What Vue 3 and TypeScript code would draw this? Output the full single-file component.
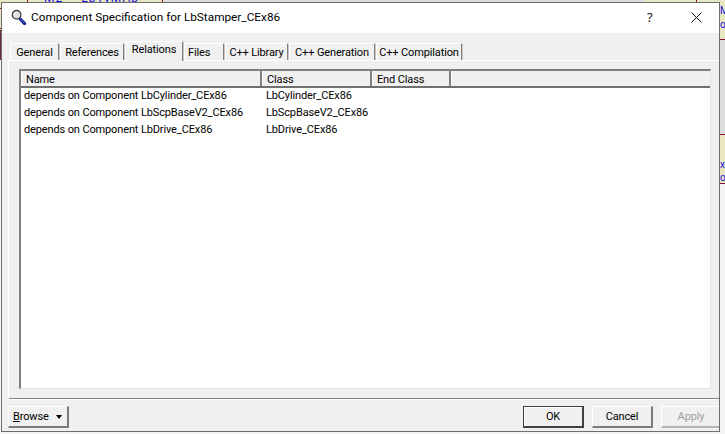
<script setup lang="ts">
interface Tab { label: string; width: number; active?: boolean; left?: boolean }
const tabs: Tab[] = [
  { label: 'General', width: 49 },
  { label: 'References', width: 64 },
  { label: 'Relations', width: 58, active: true },
  { label: 'Files', width: 40, left: true },
  { label: 'C++ Library', width: 63 },
  { label: 'C++ Generation', width: 86 },
  { label: 'C++ Compilation', width: 86 },
]
const rows = [
  { name: 'depends on Component LbCylinder_CEx86', cls: 'LbCylinder_CEx86' },
  { name: 'depends on Component LbScpBaseV2_CEx86', cls: 'LbScpBaseV2_CEx86' },
  { name: 'depends on Component LbDrive_CEx86', cls: 'LbDrive_CEx86' },
]
</script>

<template>
  <div class="desk">
    <div class="bg-top-cream"></div>
    <div class="bg-top-grey"></div>
    <div class="bg-v v1"></div>
    <div class="bg-v v2"></div>
    <div class="bg-v v3"></div>
    <div class="bg-topblue">
      <span>M2</span><span>LbTyMAb</span>
    </div>
    <div class="bg-right"></div>
    <div class="bg-right-grey"></div>
    <div class="bg-right-line l1"></div>
    <div class="bg-right-line l2"></div>
    <div class="bg-right-line l3"></div>
    <div class="bg-txt t1">M</div>
    <div class="bg-txt t2">oe</div>
    <div class="bg-txt t3">xB</div>
    <div class="bg-txt t4">oe</div>
    <div class="bg-left"></div>
    <div class="bg-left-line h1"></div>
    <div class="bg-left-line h2"></div>
    <div class="bg-left-dark"></div>

    <div class="window">
      <header class="title">
        <svg class="logo" width="16" height="16" viewBox="0 0 16 16">
          <path d="M8.5 9.2 L13.6 14.6" stroke="#10107a" stroke-width="3" stroke-linecap="round" />
          <path d="M8.8 9.4 L13.4 14.2" stroke="#3a5ae8" stroke-width="1.2" />
          <circle cx="5.6" cy="5.8" r="4.3" fill="#e0e0e0" stroke="#404040" stroke-width="1.3" />
          <path d="M3.4 6 A2.4 2.4 0 0 1 5.6 3.5" fill="none" stroke="#fff" stroke-width="1.2" />
        </svg>
        <span class="title-text">Component Specification for LbStamper_CEx86</span>
        <span class="help">?</span>
        <svg class="close" width="11" height="11" viewBox="0 0 11 11">
          <path d="M0.5 0.5 L10.5 10.5 M10.5 0.5 L0.5 10.5" stroke="#111" stroke-width="1" />
        </svg>
      </header>

      <nav class="tabs">
        <div
          v-for="t in tabs"
          :key="t.label"
          class="tab"
          :class="{ active: t.active, left: t.left }"
          :style="{ width: t.width + 'px' }"
        >{{ t.label }}</div>
      </nav>

      <section class="panel">
        <div class="list">
          <div class="head">
            <div class="hc c-name">Name</div>
            <div class="hc c-class">Class</div>
            <div class="hc c-end">End Class</div>
            <div class="hc c-rest"></div>
          </div>
          <div v-for="r in rows" :key="r.name" class="row">
            <div class="cell c-name">{{ r.name }}</div>
            <div class="cell c-class">{{ r.cls }}</div>
          </div>
        </div>
      </section>

      <footer class="foot">
        <div class="btn browse"><span><u>B</u>rowse</span><i class="arrow"></i></div>
        <div class="actions">
          <div class="btn default">OK</div>
          <div class="btn">Cancel</div>
          <div class="btn disabled">Apply</div>
        </div>
      </footer>
    </div>
  </div>
</template>

<style>
html, body { margin: 0; padding: 0; background: #f4f4f4; }
</style>

<style scoped>
.desk {
  position: relative;
  width: 725px;
  height: 434px;
  overflow: hidden;
  background: #f4f4f4;
  font-family: Roboto, "Liberation Sans", sans-serif;
  font-size: 11px;
  letter-spacing: -0.13px;
  color: #000;
}
.bg-top-cream { position: absolute; left: 0; top: 0; width: 725px; height: 3px; background: #e9e7c0; }
.bg-top-grey { position: absolute; left: 163px; top: 0; width: 482px; height: 3px; background: #dcdcdc; }
.bg-v { position: absolute; top: 0; width: 1px; height: 3px; background: #8a1035; }
.v1 { left: 27px; }
.v2 { left: 162px; }
.v3 { left: 696px; }
.bg-topblue {
  position: absolute;
  left: 44px;
  top: -9px;
  display: flex;
  gap: 18px;
  color: #1414e6;
  font-size: 12px;
  letter-spacing: 1px;
}
.bg-left { position: absolute; left: 0; top: 3px; width: 1px; height: 26px; background: #e9e7c0; }
.bg-left-line { position: absolute; left: 0; width: 1px; height: 1px; background: #8a1035; }
.h1 { top: 8px; }
.h2 { top: 28px; }
.bg-left-dark { position: absolute; left: 0; top: 30px; width: 1px; height: 30px; background: #6a2a3a; }
.bg-right { position: absolute; left: 720px; top: 0; width: 5px; height: 184px; background: #e9e7c0; }
.bg-right-grey { position: absolute; left: 720px; top: 40px; width: 5px; height: 95px; background: #dcdcdc; }
.bg-right-line { position: absolute; left: 720px; width: 5px; height: 1px; background: #8a1035; }
.l1 { top: 39px; }
.l2 { top: 134px; }
.l3 { top: 183px; }
.bg-txt { position: absolute; left: 720px; color: #1414e6; font-size: 10px; line-height: 11px; }
.t1 { top: 5px; }
.t2 { top: 19px; }
.t3 { top: 159px; }
.t4 { top: 172px; }

.window {
  position: absolute;
  left: 1px;
  top: 2px;
  width: 717px;
  height: 428px;
  border: 1px solid #6e6e6e;
  background: #f0f0f0;
  overflow: hidden;
  display: flex;
  flex-direction: column;
}
.title {
  height: 30px;
  flex: none;
  background: #fff;
  display: flex;
  align-items: center;
  padding-left: 9px;
  position: relative;
}
.logo { flex: none; margin-right: 4px; margin-top: -3px; }
.title-text {
  font-family: Roboto, sans-serif;
  font-size: 11.8px;
  letter-spacing: 0;
  color: #000;
  margin-top: -2px;
}
.help {
  position: absolute;
  left: 645px;
  top: 5px;
  font-family: "Noto Sans", sans-serif;
  font-size: 13px;
  line-height: 18px;
  color: #111;
}
.close { position: absolute; left: 689px; top: 9px; }

.tabs {
  flex: none;
  height: 27px;
  display: flex;
  align-items: flex-end;
  gap: 1px;
  padding-left: 8px;
  position: relative;
  z-index: 1;
}
.tab {
  height: 17px;
  box-sizing: border-box;
  border-top: 1px solid #fff;
  border-left: 1px solid #fff;
  border-right: 1px solid #808080;
  box-shadow: 1px 0 0 #c4c4c4;
  border-top-left-radius: 2px;
  border-top-right-radius: 2px;
  text-align: center;
  line-height: 17px;
  white-space: nowrap;
  background: #f0f0f0;
}
.tab.left { text-align: left; padding-left: 3px; }
.tab.active {
  height: 20px;
  margin-bottom: -1px;
  line-height: 16px;
}

.panel {
  flex: none;
  height: 340px;
  box-sizing: border-box;
  margin-left: 6px;
  border-top: 1px solid #fff;
  border-left: 1px solid #fff;
  border-bottom: 1px solid #fff;
  box-shadow: inset 0 -1px 0 #808080;
  padding: 8px 8px 10px 10px;
}
.list {
  height: 320px;
  box-sizing: border-box;
  background: #fff;
  border-top: 2px solid #808080;
  border-left: 2px solid #808080;
  border-right: 1px solid #e4e4e4;
  border-bottom: 1px solid #e4e4e4;
}
.head {
  display: flex;
  height: 17px;
  box-sizing: border-box;
  border-bottom: 2px solid #707070;
  background: #f0f0f0;
}
.hc {
  box-sizing: border-box;
  height: 15px;
  line-height: 17px;
  padding-left: 4px;
  border-right: 2px solid #808080;
  border-left: 1px solid #fff;
  white-space: nowrap;
}
.head .c-name { width: 241px; }
.head .c-class { width: 110px; }
.head .c-end { width: 79px; }
.head .c-rest { flex: 1; border-right: none; }
.row { display: flex; height: 17px; line-height: 15px; white-space: nowrap; }
.cell.c-name { width: 244px; padding-left: 3px; box-sizing: border-box; }
.cell.c-class { padding-left: 1px; }

.foot {
  flex: 1;
  display: flex;
  justify-content: space-between;
  padding: 6px 0 0 6px;
  align-items: flex-start;
}
.actions { display: flex; gap: 8px; margin-right: -3px; }
.btn {
  width: 61px;
  height: 22px;
  box-sizing: border-box;
  background: #f0f0f0;
  border-top: 1px solid #fff;
  border-left: 1px solid #fff;
  border-right: 2px solid #7a7a7a;
  border-bottom: 2px solid #7a7a7a;
  text-align: center;
  line-height: 20px;
}
.btn.default {
  border-top: 1px solid #404040;
  border-left: 1px solid #404040;
  border-right: 2px solid #404040;
  border-bottom: 2px solid #404040;
  box-shadow: inset 1px 1px 0 #fff;
}
.btn.disabled {
  color: #a0a0a0;
  border-right-color: #b4b4b4;
  border-bottom-color: #b4b4b4;
}
.browse {
  display: flex;
  align-items: center;
  justify-content: space-between;
  padding: 0 5px 0 4px;
}
.arrow {
  width: 0;
  height: 0;
  border-left: 3.5px solid transparent;
  border-right: 3.5px solid transparent;
  border-top: 4px solid #000;
  margin-top: 1px;
}
</style>
